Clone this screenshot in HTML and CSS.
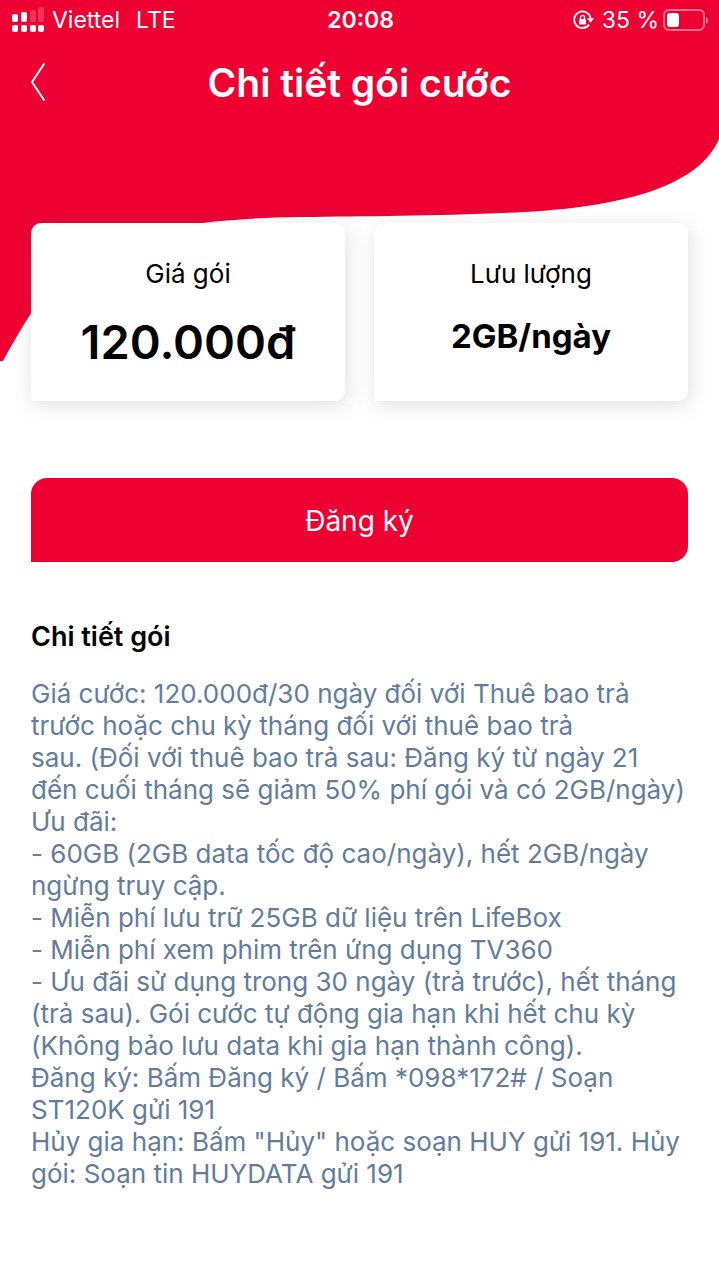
FILE: index.html
```html
<!DOCTYPE html>
<html lang="vi">
<head>
<meta charset="utf-8">
<meta name="viewport" content="width=device-width, initial-scale=1">
<title>Chi tiết gói cước</title>
<link rel="stylesheet" href="styles.css">
</head>
<body>
<div class="screen">
  <svg class="wave" viewBox="0 0 719 362" preserveAspectRatio="none" aria-hidden="true">
    <path fill="#ee0033" d="M0 0H719V139C700 183 633 206 525 212C440 216 370 216 300 217C180 219 110 235 70 267C48 286 30 312 3 361H0Z"/>
  </svg>
  <div class="statusbar">
    <div class="carrier">
      <svg width="32" height="26" viewBox="0 0 32 26" fill="#fff" aria-hidden="true">
        <rect x="0" y="7" width="6" height="8" rx="2"/><rect x="9" y="5" width="6" height="10" rx="2"/>
        <g opacity=".2"><rect x="18" y="3" width="6" height="12" rx="2"/><rect x="26" y="0" width="6" height="15" rx="2"/></g>
        <rect x="0" y="18" width="6" height="7" rx="2"/><rect x="9" y="18" width="6" height="7" rx="2"/><rect x="18" y="18" width="6" height="7" rx="2"/><rect x="26" y="18" width="6" height="7" rx="2"/>
      </svg>
      <span>Viettel</span><span class="network">LTE</span>
    </div>
    <time class="clock">20:08</time>
    <div class="power">
      <svg class="lock" width="21" height="20" viewBox="0 0 21 20" aria-hidden="true">
        <path d="M16.2 14.6A8.3 8.3 0 1 1 17.6 8" fill="none" stroke="#fff" stroke-width="1.8"/>
        <path d="M14 8.3H21L17.6 12.8Z" fill="#fff"/>
        <rect x="6" y="9" width="7" height="5.6" rx=".8" fill="#fff"/>
        <path d="M7.5 9V7.4a2 2 0 0 1 4 0V9" fill="none" stroke="#fff" stroke-width="1.3"/>
      </svg>
      <span>35 %</span>
      <svg class="battery" width="46" height="22" viewBox="0 0 46 22" aria-hidden="true">
        <rect x="1" y="1" width="40" height="20" rx="5" fill="none" stroke="#fff" stroke-opacity=".45" stroke-width="2"/>
        <rect x="4" y="4" width="12" height="14" rx="3" fill="#fff"/>
        <path d="M43 8a4 4 0 0 1 0 7Z" fill="#fff" opacity=".5"/>
      </svg>
    </div>
  </div>
  <header class="titlebar">
    <button class="back" type="button" aria-label="Quay lại">
      <svg width="16" height="40" viewBox="0 0 16 40" fill="none" stroke="#fff" stroke-width="2" stroke-linecap="round" stroke-linejoin="round" aria-hidden="true"><path d="M14 2L2 20L14 38"/></svg>
    </button>
    <h1>Chi tiết gói cước</h1>
  </header>
  <main class="content">
    <section class="cards">
      <div class="card"><h2>Giá gói</h2><p class="price">120.000đ</p></div>
      <div class="card"><h2>Lưu lượng</h2><p class="data">2GB/ngày</p></div>
    </section>
    <button class="register" type="button">Đăng ký</button>
    <section class="details">
      <h2>Chi tiết gói</h2>
      <p>Giá cước: 120.000đ/30 ngày đối với Thuê bao trả trước hoặc chu kỳ tháng đối với thuê bao trả<br>sau. (Đối với thuê bao trả sau: Đăng ký từ ngày 21 đến cuối tháng sẽ giảm 50% phí gói và có 2GB/ngày)</p>
      <p>Ưu đãi:</p>
      <p>- 60GB (2GB data tốc độ cao/ngày), hết 2GB/ngày ngừng truy cập.</p>
      <p>- Miễn phí lưu trữ 25GB dữ liệu trên LifeBox</p>
      <p>- Miễn phí xem phim trên ứng dụng TV360</p>
      <p>- Ưu đãi sử dụng trong 30 ngày (trả trước), hết tháng (trả sau). Gói cước tự động gia hạn khi hết chu kỳ (Không bảo lưu data khi gia hạn thành công).</p>
      <p>Đăng ký: Bấm Đăng ký / Bấm *098*172# / Soạn ST120K gửi 191</p>
      <p>Hủy gia hạn: Bấm "Hủy" hoặc soạn HUY gửi 191. Hủy gói: Soạn tin HUYDATA gửi 191</p>
    </section>
  </main>
</div>
</body>
</html>
```

FILE: styles.css
```css
*{box-sizing:border-box}
body{margin:0;background:#fff;color:#000;font-family:Inter,"Noto Sans",sans-serif}
h1,h2,p{margin:0}
svg{display:block;flex:none}
.screen{position:relative;min-height:100vh}
.wave{position:absolute;top:0;left:0;width:100%;height:362px}
.statusbar,.titlebar,.content{position:relative}
.statusbar{display:grid;grid-template-columns:1fr auto 1fr;align-items:center;height:40px;padding:0 10px 0 12px;color:#fff;font-size:23px}
.carrier{display:flex;align-items:center;gap:8px}
.network{margin-left:8px}
.clock{font-weight:600}
.power{display:flex;align-items:center;justify-content:flex-end;gap:4px}
.lock{margin-right:4px}
.titlebar{display:flex;align-items:center;justify-content:center;height:84px;color:#fff}
.titlebar h1{font-size:39px;font-weight:600}
.back{position:absolute;left:30px;padding:0;border:0;background:none;cursor:pointer}
.content{padding:99px 31px 80px}
.cards{display:grid;grid-template-columns:1fr 1fr;gap:29px}
.card{min-height:178px;padding:33px 12px 24px;border-radius:10px 10px 10px 2px;background:#fff;box-shadow:2px 4px 20px rgba(100,100,100,.2);text-align:center}
.card h2{font-size:26px;font-weight:400;line-height:36px}
.card p{margin-top:20px}
.price{font-size:47px;font-weight:600;line-height:60px}
.data{font-size:33px;font-weight:700;line-height:48px}
.register{display:block;width:100%;height:84px;margin-top:77px;padding:2px 0 0;border:0;border-radius:16px 16px 16px 0;background:#ee0033;color:#fff;font-family:inherit;font-size:28px;cursor:pointer}
.details{padding-top:59px}
.details h2{margin-bottom:25px;font-size:27px;font-weight:600;line-height:32px}
.details p{color:#627d9b;font-size:26px;line-height:32px;font-variant-ligatures:no-contextual}
```
